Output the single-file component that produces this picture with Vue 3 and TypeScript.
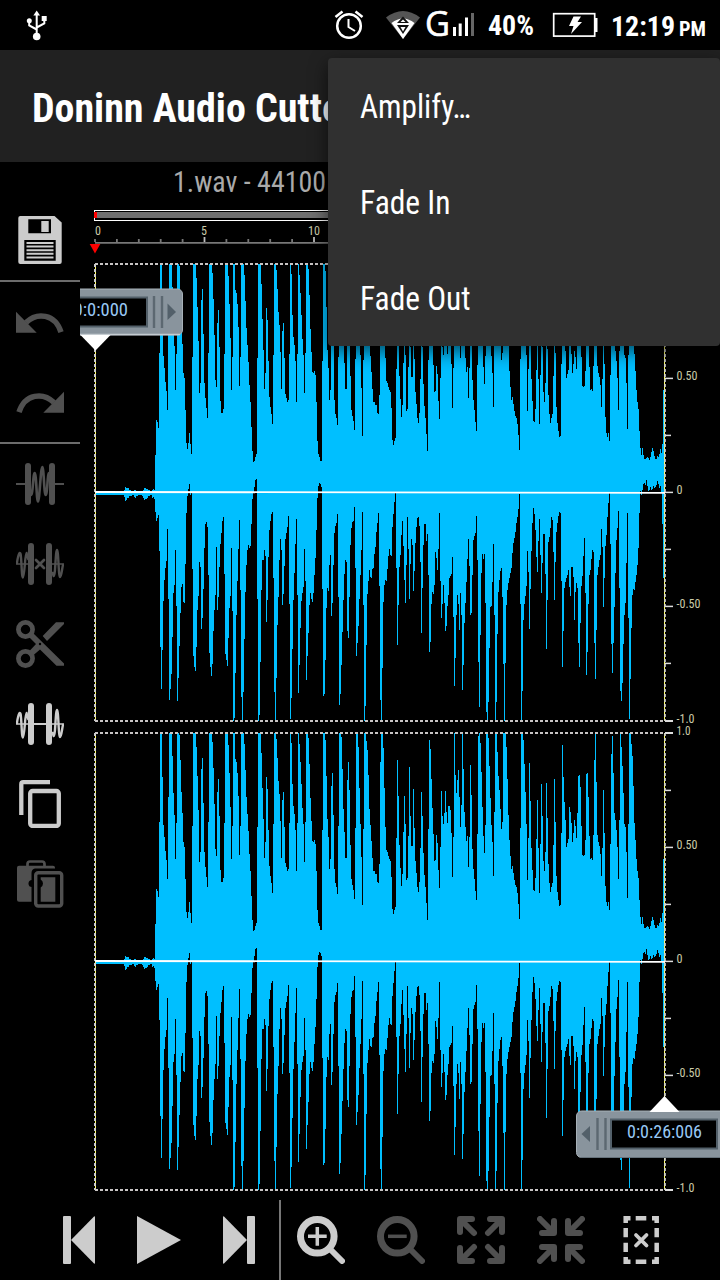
<script setup lang="ts">
type Step = [number, number]

// Envelope samples in third-of-a-pixel units: "x,y" means the level y holds from x onwards.
const upperSource = `18,693 102,687 105,678 108,682 117,686 123,690 132,686 138,690 159,687 162,681 168,685 174,688 180,692 186,687 189,684 192,687 195,582 198,477 201,483 204,501 207,276 210,9 216,141 219,285 222,321 225,363 228,390 231,447 234,201 237,9 246,78 249,189 252,255 255,387 258,279 261,9 267,15 270,90 273,186 276,249 279,336 282,351 285,447 288,546 291,564 294,546 297,516 300,549 303,579 306,288 309,9 318,51 321,138 324,240 327,396 330,366 333,117 336,84 339,219 342,366 345,411 348,441 351,471 354,276 357,9 366,36 369,114 372,222 375,357 378,378 381,186 384,147 387,258 390,420 393,456 399,444 402,279 405,9 414,45 417,129 420,231 423,387 426,288 429,9 435,87 438,96 441,129 444,198 447,375 450,288 453,9 462,42 465,120 468,201 471,252 474,303 477,372 480,423 483,498 486,570 489,603 492,600 495,588 498,579 501,291 504,9 513,69 516,174 519,267 522,384 525,336 528,141 531,177 534,300 537,408 540,438 543,459 546,489 549,282 552,9 558,27 561,84 564,153 567,192 570,273 573,384 576,210 579,186 582,291 585,399 588,411 591,423 594,417 597,279 600,9 603,39 606,162 609,228 612,252 615,300 618,423 621,279 624,9 627,42 630,96 633,162 636,234 639,282 642,396 645,276 648,9 654,24 657,102 660,204 663,273 666,333 669,336 672,330 675,342 678,423 681,540 684,579 687,588 690,600 696,300 699,9 705,30 708,138 711,267 714,321 717,417 720,387 723,168 726,129 729,255 732,417 735,459 738,471 741,492 744,288 747,9 753,21 756,117 759,237 762,306 765,384 771,150 774,96 777,180 780,345 783,447 786,465 789,480 792,507 795,294 798,9 804,51 807,174 810,282 813,381 816,525 819,297 822,9 828,33 831,60 834,135 837,237`
const upperTail = `0,285 3,333 6,384 9,423 15,432 21,456 24,459 27,402 30,96 33,9 39,54 42,174 45,291 48,360 51,366 54,378 57,387 60,393 63,441 66,537 69,552 72,540 75,531 78,324 81,90 84,198 87,345 90,414 93,468 96,432 99,306 102,198 105,282 108,450 111,444 114,318 117,111 120,258 123,348 129,177 132,294 135,393 138,429 141,471 144,486 147,456 150,354 153,186 156,258 159,369 162,435 165,471 168,519 171,570 174,297 177,30 180,57 183,147 186,234 189,312 192,393 195,390 198,315 201,339 204,420 207,474 210,351 213,183 216,258 219,282 222,249 225,183 228,246 231,279 234,228 240,240 243,309 246,441 249,321 252,9 255,135 258,189 261,150 264,120 267,201 270,291 273,225 276,9 279,117 282,246 285,291 288,333 291,318 294,411 297,321 300,105 303,195 306,357 309,417 312,447 315,483 318,510 321,312 324,18 327,9 330,39 333,126 336,231 339,318 342,369 345,285 348,9 354,24 357,108 360,204 363,285 366,336 369,438 372,246 375,9 381,66 384,138 387,180 390,237 393,297 396,276 399,9 408,51 411,147 414,255 417,330 420,378 423,417 426,408 429,429 432,450 435,465 438,471 441,489 444,522 447,567 450,294 453,9 459,30 462,102 465,186 468,282 471,450 474,324 477,99 480,213 483,354 486,420 489,480 492,483 495,444 498,327 501,210 504,354 507,489 510,342 513,162 516,258 519,393 522,423 525,366 528,159 531,264 534,402 537,459 540,486 543,471 546,459 549,345 552,147 555,276 558,438 561,486 564,510 567,528 570,525 573,309 576,45 579,141 582,216 585,270 588,351 591,339 594,327 597,231 600,246 603,279 606,336 609,309 612,270 615,288 618,324 621,249 624,138 627,135 630,171 633,288 636,375 639,378 642,375 645,330 648,132 651,129 654,201 657,318 660,387 663,384 666,390 669,315 672,90 675,9 678,156 681,315 684,336 687,348 690,372 693,438 696,354 699,180 702,309 705,468 708,516 711,528 714,516 717,540 720,342 723,72 726,18 729,129 732,249 735,270 738,300 741,351 744,447 747,270 750,9 753,51 756,108 759,189 762,282 765,291 768,366 771,504 774,282 777,9 783,42 786,78 789,168 792,279 795,330 798,387 801,423 804,444 807,510 810,561 813,582 816,561 819,582 822,594 828,591 831,588 834,591 837,597 840,588 843,573 846,561 849,570 852,585 855,594 861,585 864,588 867,579 870,564 873,576 876,549 879,387 882,387`
const lowerSource = `18,41 102,48 105,60 108,56 111,52 117,45 126,41 132,47 135,51 138,45 144,41 156,44 159,52 162,57 165,53 171,50 174,46 180,42 186,50 189,47 192,54 195,93 198,120 201,111 204,102 207,210 210,498 213,624 216,507 219,360 222,297 225,261 228,240 231,144 234,354 237,657 240,624 243,579 246,468 249,336 252,312 255,207 258,375 261,660 264,591 267,495 270,396 273,318 276,309 279,363 282,366 285,249 288,96 291,45 294,24 297,9 300,42 303,36 306,264 309,525 312,558 315,570 318,498 321,387 324,345 327,243 330,258 333,444 336,411 339,324 342,201 345,129 348,123 351,138 354,282 357,516 360,558 363,585 366,549 369,450 372,387 375,342 378,198 381,387 384,348 387,258 390,189 393,156 396,120 399,108 402,279 405,519 408,537 411,555 414,471 417,381 420,345 423,201 426,390 429,720 432,711 435,576 438,402 441,300 444,204 447,117 450,327 453,648 456,720 459,633 462,474 465,333 468,252 471,207 474,192 477,201 480,195 483,129 486,54 489,33 492,18 495,-3 498,-6 501,354 504,720 507,702 510,543 513,327 516,237 522,207 525,225 528,423 531,357 534,228 537,147 540,120 543,99 546,93 549,291 552,633 555,720 558,591 561,432 564,348 567,237 570,174 573,207 576,372 579,339 582,255 585,174 588,156 591,138 594,105 597,369 600,714 603,651 606,504 609,357 612,276 615,189 618,114 621,342 624,636 627,552 630,441 633,360 636,336 639,318 642,204 645,300 648,597 651,525 654,456 657,372 660,336 663,354 666,363 669,336 672,282 675,231 678,147 681,51 684,15 687,6 690,9 693,18 696,324 699,645 702,639 705,537 708,381 711,321 714,330 717,252 720,222 723,405 726,366 729,252 732,156 735,135 738,126 741,99 744,348 747,672 750,639 753,552 756,453 759,357 762,279 765,237 768,243 771,450 774,471 777,348 780,192 783,141 786,123 789,120 792,78 795,261 798,525 801,486 804,435 807,354 810,282 813,207 816,93 819,372 822,720 825,675 828,492 831,339 834,300 837,267`
const lowerTail = `0,288 3,291 6,264 9,261 12,219 15,198 18,153 21,126 24,96 27,315 30,657 33,720 36,561 39,363 42,312 45,297 48,300 51,264 54,225 57,204 60,222 63,225 66,138 69,99 72,63 75,36 78,261 81,492 84,372 87,258 90,222 93,162 96,120 99,195 102,297 105,366 108,252 111,108 114,204 117,354 120,249 123,174 126,192 129,330 132,270 135,186 138,138 141,111 144,108 147,135 150,243 153,456 156,321 159,192 162,129 168,180 171,159 174,282 177,513 180,483 183,369 186,333 189,339 192,312 195,213 198,231 201,267 204,204 207,96 210,300 213,411 216,369 219,312 222,366 225,450 228,435 231,375 234,342 237,291 240,285 243,279 246,228 249,408 252,615 255,531 258,402 261,342 264,369 267,447 270,336 273,402 276,627 279,552 282,426 285,366 288,303 291,234 294,174 297,255 300,402 303,396 306,282 309,177 312,165 315,156 318,105 321,237 324,543 327,678 330,462 333,276 336,219 339,234 342,219 345,366 348,693 351,717 354,663 357,501 360,378 363,375 366,303 369,189 372,402 375,720 378,663 381,459 384,333 387,297 390,270 393,261 396,348 399,549 402,720 405,546 408,372 411,327 414,306 417,291 420,276 423,261 426,216 429,186 432,171 435,153 438,126 441,108 444,84 447,39 450,369 453,720 456,630 459,417 462,369 465,345 468,315 471,210 474,273 477,444 480,324 483,210 486,126 489,81 492,99 495,147 498,228 501,273 504,180 507,114 510,222 513,336 516,246 519,159 525,279 528,504 531,357 534,183 537,168 540,141 543,108 546,117 549,213 552,357 555,243 558,153 561,126 564,105 567,93 570,96 573,300 576,558 579,450 582,321 585,303 588,291 591,282 594,267 597,318 600,345 603,258 609,288 612,417 615,333 618,306 621,321 624,486 627,558 630,426 633,315 636,285 639,225 642,171 645,336 648,582 651,513 654,369 657,282 660,267 663,234 666,207 669,213 672,486 675,594 678,447 681,282 684,258 687,237 690,222 693,144 696,198 699,378 702,291 705,195 708,162 711,108 714,66 717,36 720,189 723,489 726,576 729,486 732,378 735,276 738,177 741,141 744,90 747,321 750,630 753,660 756,606 759,489 762,402 765,366 768,246 771,96 774,411 777,714 780,594 783,441 786,342 789,324 792,327 795,303 798,282 801,252 804,201 807,96 810,30 813,42 816,27 819,9 822,6 825,12 828,-3 831,15 834,30 837,27 840,18 843,27 846,24 849,15 852,21 855,18 858,12 861,0 864,9 867,21 870,15 873,36 876,129 879,291 882,291`

const parse = (source: string, dx = 0, dy = 0): Step[] =>
  source.split(' ').map((pair) => {
    const [x, y] = pair.split(',').map(Number)
    return [x + dx, y + dy]
  })

const upper = [...parse(upperSource), ...parse(upperTail, 840)]
const lower = [...parse(lowerSource, 0, 660), ...parse(lowerTail, 840, 660)]

function buildArea(): string {
  const end = 1722
  let d = `M${upper[0][0]} ${upper[0][1]}`
  upper.forEach(([, y], i) => {
    d += `V${y}H${upper[i + 1]?.[0] ?? end}`
  })
  for (let i = lower.length - 1; i >= 0; i--) d += `V${lower[i][1]}H${lower[i][0]}`
  return d + 'Z'
}
const wavePath = buildArea()

const channels = ['left', 'right']
const levels = [
  { y: 6, label: '1.0', ty: 8, w: 14 },
  { y: 63, label: '', ty: 0, w: 0 },
  { y: 120, label: '0.50', ty: 122, w: 21 },
  { y: 177, label: '', ty: 0, w: 0 },
  { y: 234, label: '0', ty: 236, w: 6 },
  { y: 291, label: '', ty: 0, w: 0 },
  { y: 348, label: '-0.50', ty: 350, w: 24 },
  { y: 405, label: '', ty: 0, w: 0 },
  { y: 463, label: '-1.0', ty: 465, w: 18 },
]
const ticks = Array.from({ length: 26 }, (_, i) => ({ x: 15 + i * 21.9, major: i % 5 === 0 && i > 0 }))
const tools = ['save', '|', 'undo', 'redo', '|', 'trim', 'remove', 'cut', 'keep', 'copy', 'paste']
const disabled = ['undo', 'redo', 'trim', 'remove', 'cut', 'paste', 'zoomOut', 'expand', 'shrink']
const controls = ['prev', 'play', 'next', '|', 'zoomIn', 'zoomOut', 'expand', 'shrink', 'deselect']
const menu = [
  { text: 'Amplify…', w: 111 },
  { text: 'Fade In', w: 90.5 },
  { text: 'Fade Out', w: 110.5 },
]
</script>

<template>
  <div class="app">
    <header class="status">
      <svg width="720" height="50" fill="none" stroke="#fff">
        <g stroke-width="2">
          <path d="M36.7 14V36M29.2 21V25.5L36.7 29.5M44.3 19V23.5L36.7 27.5" />
          <path d="M36.7 10.5L40 15.5H33.4Z" fill="#fff" stroke="none" />
          <circle cx="29.3" cy="20.7" r="2.5" fill="#fff" stroke="none" />
          <path d="M41.700 16h5v5h-5z" fill="#fff" stroke="none" />
          <circle cx="36.7" cy="36.5" r="3.8" fill="#fff" stroke="none" />
        </g>
        <circle cx="349" cy="26" r="11.8" stroke-width="2.5" />
        <path d="M348.5 19V27L355 31" stroke-width="2" />
        <path d="M335.5 17L342.5 11.5M362.5 17L355.5 11.5" stroke-width="2.6" />
        <g stroke="none">
          <path d="M386 17.5Q403 4.500 420 17.500L403 39Z" fill="#555" />
          <path d="M391.500 23Q403 14 414.500 23L403 39Z" fill="#fff" />
          <path d="M403 16.500L409 23H397Z" fill="#111" />
          <path d="M397 25H409L403 34Z" fill="#111" />
          <path d="M400.500 27H405.500L403 31.500Z" fill="#fff" />
          <path d="M403 19.500L405.500 22H400.500Z" fill="#fff" />
          <path d="M453 27h3v9h-3zM458.700 23.500h3v12.500h-3zM465 17.500h3v18.500h-3z" fill="#fff" />
          <path d="M471 13h3v23h-3z" fill="#666" />
          <path d="M594.500 18h3v14h-3z" fill="#fff" />
          <path d="M573.500 16.500H581L577.500 22H582L571 34L573.500 26H569Z" fill="#fff" />
        </g>
        <rect x="553.700" y="13.700" width="41" height="22.400" stroke-width="1.700" />
        <g fill="#fff" stroke="none">
          <text x="425" y="36" class="signal" stroke="#fff" stroke-width=".6" textLength="25" lengthAdjust="spacingAndGlyphs">G</text>
          <text x="488" y="35" class="bold" font-size="27" textLength="46" lengthAdjust="spacingAndGlyphs">40%</text>
          <text x="611" y="36" class="bold" font-size="27" textLength="64" lengthAdjust="spacingAndGlyphs">12:19</text>
          <text x="679" y="36" class="bold" font-size="20" textLength="27" lengthAdjust="spacingAndGlyphs">PM</text>
        </g>
      </svg>
    </header>

    <div class="titlebar">
      <svg width="420" height="112">
        <text x="32" y="72" class="bold" font-size="40" fill="#fff" textLength="309" lengthAdjust="spacingAndGlyphs">Doninn Audio Cutte</text>
      </svg>
    </div>

    <div class="file">
      <svg width="400" height="38">
        <text x="173" y="30" font-size="29" fill="#aaa" textLength="153" lengthAdjust="spacingAndGlyphs">1.wav - 44100</text>
      </svg>
    </div>

    <main class="work">
      <nav class="tools">
        <template v-for="(tool, i) in tools" :key="i">
          <hr v-if="tool === '|'" />
          <button v-else :class="{ off: disabled.includes(tool) }">
            <svg viewBox="0 0 48 48" width="48" height="48" fill="none" stroke="currentColor">
              <g v-if="tool === 'save'" stroke="none">
                <path d="M4.300 0H38.500L45.700 6.500V46Q45.700 48 43.700 48H4.300Q2.300 48 2.300 46V2Q2.300 0 4.300 0Z" fill="currentColor" />
                <path d="M12.300 3.300H35V17.300H12.300ZM8.300 24H39.700V44.700H8.300Z" fill="#000" />
                <path d="M25.300 5H32.700V16H25.300ZM10.500 26h27v2h-27zM10.500 29.600h27v2h-27zM10.500 33.200h27v2h-27zM10.500 36.800h27v2h-27zM10.500 40.400h27v2h-27z" fill="currentColor" />
              </g>
              <g v-else-if="tool === 'undo' || tool === 'redo'" :transform="tool === 'redo' ? 'matrix(-1 0 0 1 48 0)' : undefined">
                <path d="M0 13.700V34.700H20.700Z" fill="currentColor" stroke="none" />
                <path d="M10 24.500C21 14 39 15.500 45 34.200" stroke-width="5.500" />
              </g>
              <g v-else-if="tool === 'trim'">
                <path d="M12 6V42M36 6V42" stroke-width="6" stroke-linecap="round" />
                <path d="M0 24H10M38 24H48" stroke-width="2.200" />
                <path d="M15 35C17 35 17 13 18.700 13S20.500 41.500 22 41.500S24.700 7 26.300 7S28 35 29.700 35S31.500 13 33 13" stroke-width="2.600" />
              </g>
              <g v-else-if="tool === 'remove' || tool === 'keep'">
                <path d="M15 6V42M33 6V42" stroke-width="6" stroke-linecap="round" />
                <path d="M.8 24C2.500 12 4 12 4.600 14C5.800 22 5.500 37.500 7 37.500S9 13 10.500 13L12.500 20M36 32L37.700 36C39.500 36 39.500 10 41 10S42.500 37 44 37S46 28 47.200 24" stroke-width="2.400" />
                <path d="M0 24H12M36 24H48" stroke-width="1.500" />
                <path v-if="tool === 'remove'" d="M20 20L28 28M28 20L20 28" stroke-width="2.700" stroke-linecap="round" />
                <path v-else d="M15 24H33" stroke-width="2" />
              </g>
              <g v-else-if="tool === 'cut'">
                <circle cx="9.500" cy="9.500" r="7.100" stroke-width="4.700" />
                <circle cx="9.500" cy="38.500" r="7.100" stroke-width="4.700" />
                <path d="M13 17L17 13L48 43.500V45.700H40.500L24 29.500L17 35.500L13 31.500L20 24ZM26.700 16L40 2.300H48V4L31 21Z" fill="currentColor" stroke="none" />
                <circle cx="24" cy="24" r="1.200" fill="#000" stroke="none" />
              </g>
              <g v-else-if="tool === 'copy'" stroke-width="4.300">
                <path d="M5.300 35V4.200Q5.300 2.200 7.300 2.200H34" />
                <rect x="14.200" y="11" width="28.600" height="35" rx="2.500" />
              </g>
              <g v-else>
                <path d="M11.500 6V4Q11.500 1.500 14 1.500H26Q28.500 1.500 28.500 4V6" stroke-width="2.700" />
                <rect x="1" y="5.700" width="38" height="36" rx="2" fill="currentColor" stroke="none" />
                <path d="M39 8.500H19Q15.500 9 15.500 13V48H48V8.500Z" fill="#000" stroke="none" />
                <circle cx="16" cy="23.500" r="3.500" fill="#000" stroke="none" />
                <rect x="19.700" y="12.700" width="26" height="33.300" rx="2.500" stroke-width="3.400" />
                <path d="M24.700 17.300H39.300V41.700H24.700V27.500Q27 26 27 23.500T24.700 19.500Z" fill="currentColor" stroke="none" />
              </g>
            </svg>
          </button>
        </template>
      </nav>

      <section class="editor">
        <svg class="ruler" width="640" height="58">
          <path d="M14 10h571v11h-571z" fill="#fff" />
          <path d="M15 11h569v9h-569z" fill="#000" />
          <path d="M15 12h569v6h-569z" fill="#707070" />
          <path d="M14 12h3v6h-3z" fill="#f00" />
          <path d="M15 42h570v1.700h-570z" fill="#777" />
          <path v-for="t in ticks" :key="t.x" :d="`M${t.x - 0.9} ${t.major ? 37 : 39}h1.800V42h-1.800z`" :fill="t.major ? '#bbb' : '#777'" />
          <g font-size="12" fill="#ccccaa">
            <text x="15" y="35">0</text>
            <text x="121" y="35">5</text>
            <text x="228" y="35" textLength="12" lengthAdjust="spacingAndGlyphs">10</text>
          </g>
          <path d="M9.700 44H20.300L15 53.500Z" fill="#f00" />
        </svg>

        <svg v-for="channel in channels" :key="channel" class="channel" width="640" height="469">
          <path :d="wavePath" fill="#00bfff" shape-rendering="crispEdges" transform="translate(10 3) scale(.333333)" />
          <path d="M15.500 6V463" stroke="#ffff66" />
          <path d="M584.500 6V463" stroke="#ffff66" />
          <path d="M15 6V463" stroke="#ccc" stroke-width="2" stroke-dasharray="3 2" />
          <path d="M585 6V463" stroke="#ccc" stroke-width="2" stroke-opacity=".85" stroke-dasharray="3 2" />
          <path d="M15 6H585M15 463H585" stroke="#c8c4c4" stroke-width="2" stroke-dasharray="3 2" />
          <path d="M15 234L585 234.800" stroke="#fff" stroke-width="1.800" />
          <template v-for="(l, i) in levels" :key="i">
            <path :d="`M585 ${l.y + (i % 8 ? 0.4 : 0)}H${i % 2 ? 591 : 593}`" stroke="#ddd" :stroke-width="i % 8 ? 1.500 : 2" />
            <text v-if="l.label" x="596.500" :y="l.ty" font-size="12" fill="#ccccaa" :textLength="l.w" lengthAdjust="spacingAndGlyphs">{{ l.label }}</text>
          </template>
        </svg>

        <div class="handle start">
          <svg width="150" height="64">
            <rect x=".5" y="1" width="143" height="46" rx="5" fill="#89949d" stroke="#a7b1b8" />
            <path d="M1 46.500H141" stroke="#c5ccd1" stroke-width="1.500" />
            <rect x="3" y="9.500" width="105" height="29" fill="#000" stroke="#53606a" stroke-width="2" />
            <path d="M115 8V40M123 8V40" stroke="#5c6871" stroke-width="2.400" />
            <path d="M128.500 15.500V32L137 24Z" fill="#53606a" />
            <path d="M41.500 47H71.500L56.500 62.500Z" fill="#fff" />
            <text x="21" y="28" font-size="18" fill="#98c8f4" textLength="68" lengthAdjust="spacingAndGlyphs">0:0:0:000</text>
          </svg>
        </div>
        <div class="handle end">
          <svg width="150" height="64">
            <rect x=".5" y="15" width="149" height="46.500" rx="5" fill="#89949d" stroke="#a7b1b8" />
            <path d="M4 61.500H148" stroke="#66727b" />
            <path d="M73.500 16L88.500 0L103.500 16Z" fill="#fff" />
            <rect x="35" y="23.500" width="106" height="29" fill="#000" stroke="#53606a" stroke-width="2" />
            <path d="M21.500 22V54M29.500 22V54" stroke="#5c6871" stroke-width="2.400" />
            <path d="M14 30V46L5.500 38Z" fill="#53606a" />
            <text x="51" y="42" font-size="18" fill="#98c8f4" textLength="75" lengthAdjust="spacingAndGlyphs">0:0:26:006</text>
          </svg>
        </div>
      </section>
    </main>

    <footer class="controls">
      <template v-for="(c, i) in controls" :key="i">
        <i v-if="c === '|'" class="split"></i>
        <button v-else :class="{ off: disabled.includes(c) }">
          <svg viewBox="0 0 48 48" width="48" height="48" fill="none" stroke="currentColor">
            <g v-if="c === 'prev' || c === 'next'" fill="currentColor" stroke="none" :transform="c === 'next' ? 'matrix(-1 0 0 1 46 0)' : undefined">
              <rect x="7" y="0" width="8" height="48" rx="1" />
              <path d="M15 24L38 .5Q39 0 39 1V47Q39 48 38 47.500Z" />
            </g>
            <path v-else-if="c === 'play'" d="M1 0L45 24L1 48Z" fill="currentColor" stroke="none" />
            <g v-else-if="c === 'zoomIn' || c === 'zoomOut'">
              <circle cx="20.300" cy="20.300" r="16.800" stroke-width="7" />
              <path d="M33 33L45 45" stroke-width="6" stroke-linecap="round" />
              <path :d="c === 'zoomIn' ? 'M11 20.300H29.700M20.300 11V29.700' : 'M11 20.300H29.700'" stroke-width="3.500" />
            </g>
            <g v-else-if="c === 'expand' || c === 'shrink'" stroke-width="6" stroke-linecap="round" stroke-linejoin="round">
              <path
                v-for="m in ['1 0 0 1 0 0', '-1 0 0 1 48 0', '1 0 0 -1 0 48', '-1 0 0 -1 48 48']"
                :key="m"
                :transform="`matrix(${m})`"
                :d="c === 'expand' ? 'M15 3H3V16M4 4L17 17' : 'M17 5V17H5M3 3L16 16'"
              />
            </g>
            <g v-else stroke-width="4.500">
              <path d="M8.700 7V2.200H13.500M35 2.200H39.700V7M39.700 41V45.800H35M13.500 45.800H8.700V41M18.700 2.200H29.300M18.700 45.800H29.300M8.700 12V21.300M8.700 26.700V36M39.700 12V21.300M39.700 26.700V36" />
              <path d="M19 19L29.500 29.500M29.500 19L19 29.500" stroke-width="3.800" stroke-linecap="round" />
            </g>
          </svg>
        </button>
      </template>
    </footer>

    <div class="menu">
      <div v-for="m in menu" :key="m.text" class="item">
        <svg width="200" height="96">
          <text x="0" y="60" font-size="33" fill="#fff" :textLength="m.w" lengthAdjust="spacingAndGlyphs">{{ m.text }}</text>
        </svg>
      </div>
    </div>
  </div>
</template>

<style>
body {
  background: #000;
}
</style>

<style scoped>
.app {
  position: relative;
  width: 720px;
  height: 1280px;
  overflow: hidden;
  display: flex;
  flex-direction: column;
  background: #000;
  color: #ccc;
  font-family: 'Roboto Condensed', Roboto, 'Liberation Sans', sans-serif;
  font-stretch: 75%;
}
svg {
  display: block;
  flex: none;
}
.bold {
  font-weight: 700;
}
.signal {
  font-family: 'Open Sans', sans-serif;
  font-size: 34px;
  font-stretch: 100%;
}
.status {
  height: 50px;
}
.titlebar {
  height: 112px;
  background: #212121;
}
.file {
  height: 38px;
}
.work {
  display: flex;
  height: 1000px;
}
.tools {
  width: 80px;
}
hr {
  height: 2px;
  margin: 0;
  border: 0;
  background: #6c6c6c;
}
button {
  display: flex;
  align-items: center;
  justify-content: center;
  width: 80px;
  height: 80px;
  padding: 0;
  border: 0;
  background: none;
  color: #ccc;
}
button.off {
  color: #505050;
}
.editor {
  position: relative;
  width: 640px;
  overflow: hidden;
}
.channel {
  overflow: visible;
}
.handle {
  position: absolute;
}
.start {
  left: -41.5px;
  top: 88px;
}
.end {
  left: 495.5px;
  top: 896px;
}
.controls {
  display: flex;
  height: 80px;
  padding-left: 40px;
}
.split {
  width: 2px;
  margin: 0 0 0 -1px;
  background: #777;
}
.menu {
  position: absolute;
  left: 328px;
  top: 58px;
  width: 391px;
  height: 288px;
  padding-right: 1px;
  border-radius: 4px;
  background: #303030;
  box-shadow: 0 6px 18px rgba(0, 0, 0, 0.6);
}
.item {
  height: 96px;
  padding-left: 32px;
}
</style>
